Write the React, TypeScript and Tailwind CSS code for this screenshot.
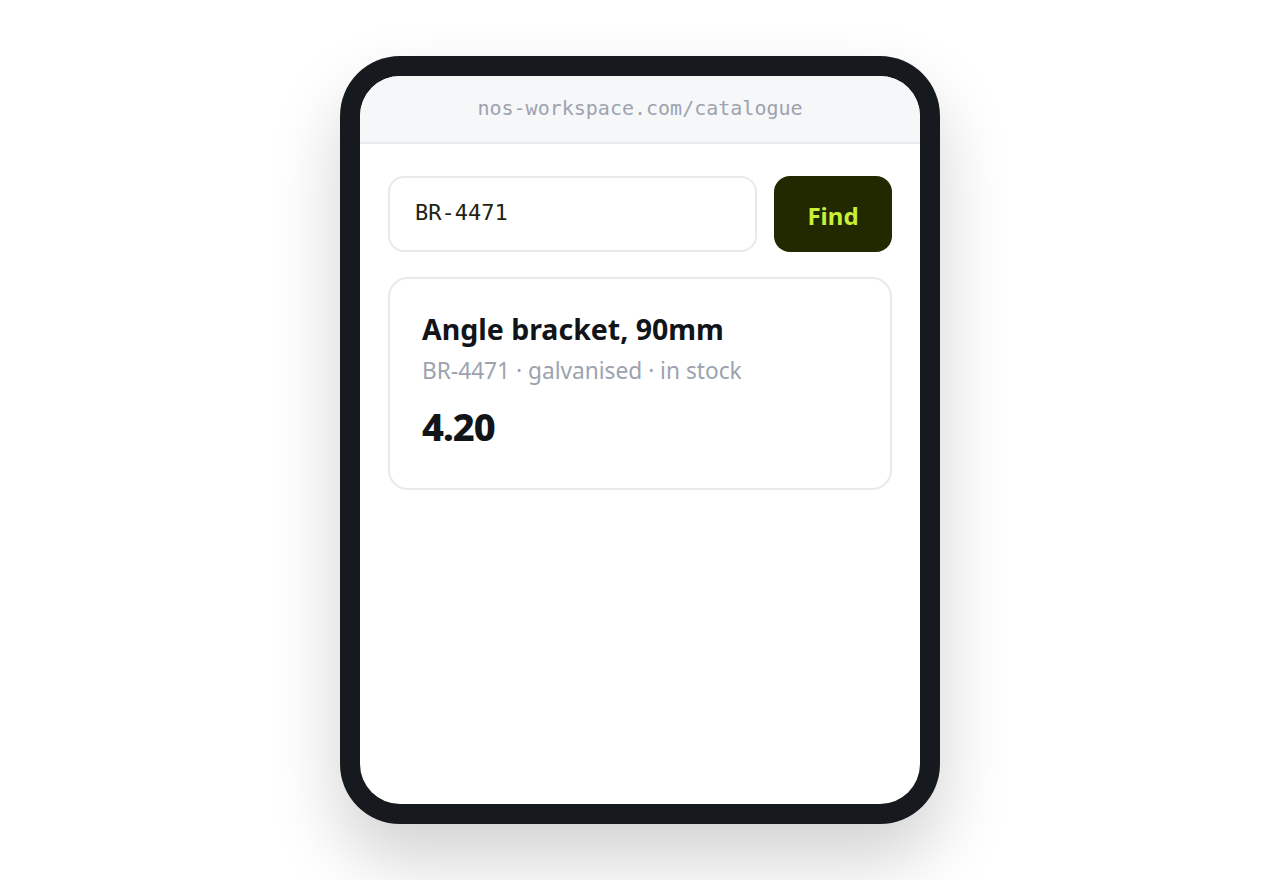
export default function App() {
  return (
    <div className="flex h-[880px] w-full items-start justify-center bg-white pt-[56px] font-['Noto_Sans',sans-serif]">
      <div className="h-[768px] w-[600px] rounded-[60px] bg-[#16191d] p-[20px] shadow-[0_36px_70px_rgba(0,0,0,0.18)]">
        <div className="flex h-full flex-col overflow-hidden rounded-[40px] bg-white">
          <div className="flex h-[68px] shrink-0 items-center justify-center border-b-2 border-[#e8eaed] bg-[#f6f7f9] pb-[2px]">
            <span className="font-['DejaVu_Sans_Mono',monospace] text-[20px] text-[#9ca3af]">
              nos-workspace.com/catalogue
            </span>
          </div>

          <div className="flex flex-col gap-[25px] px-[28px] pt-[32px]">
            <div className="flex gap-[17px]">
              <div className="flex h-[76px] flex-1 items-center rounded-[16px] border-2 border-[#e8e9eb] px-[25px] pb-[4px]">
                <span className="font-['DejaVu_Sans_Mono',monospace] text-[22px] text-[#1f2410]">
                  BR-4471
                </span>
              </div>
              <button className="flex h-[76px] w-[118px] items-center justify-center rounded-[16px] bg-[#222800] pt-[4px] text-[24px] font-bold text-[#c8f135]">
                Find
              </button>
            </div>

            <div className="flex h-[213px] flex-col rounded-[20px] border-2 border-[#e8e9eb] px-[32px] pt-[30px]">
              <div className="text-[28.5px] font-bold leading-[40px] text-[#111418]">
                Angle bracket, 90mm
              </div>
              <div className="mt-[7px] text-[22.7px] leading-[30px] text-[#9ca3af]">
                BR-4471 · galvanised · in stock
              </div>
              <div className="mt-[16px] text-[38px] font-extrabold leading-[48px] tracking-[-1px] text-[#111418]">
                4.20
              </div>
            </div>
          </div>
        </div>
      </div>
    </div>
  );
}
